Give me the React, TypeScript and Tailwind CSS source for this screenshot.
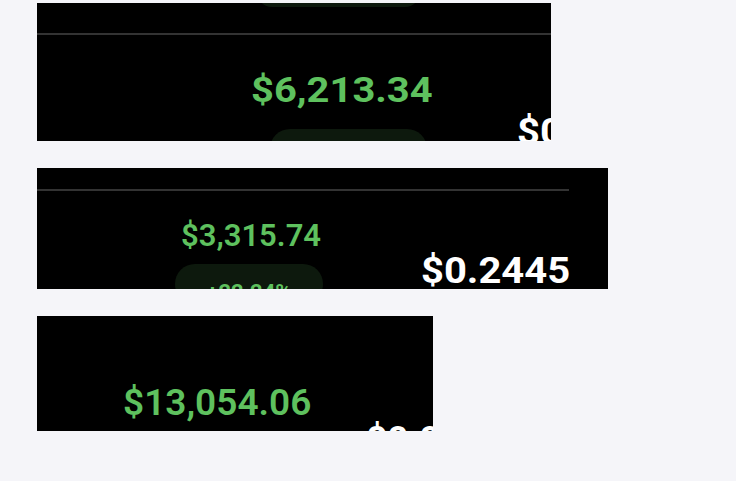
export default function App() {
  return (
    <div
      className="min-h-[481px] w-[736px] bg-[#f5f5f9] pt-[3px] flex flex-col gap-[27px]"
      style={{ fontFamily: "Roboto, 'Liberation Sans', sans-serif" }}
    >
      {/* first crop */}
      <div className="ml-[37px] w-[514px] h-[138px] bg-black overflow-hidden flex flex-col">
        <div className="mt-[-26px] ml-[220px] w-[163px] h-[30px] rounded-full bg-[#0d190d] shrink-0" />
        <div className="mt-[26px] h-[2px] w-full bg-[#333333] shrink-0" />
        <div className="mt-[38px] ml-[214px] self-start origin-left scale-x-[1.14] text-[35px] leading-none font-bold text-[#5ec15e] whitespace-nowrap">
          $6,213.34
        </div>
        <div className="mt-[5px] flex items-start shrink-0">
          <div className="mt-[16px] ml-[233px] w-[157px] h-[40px] rounded-full bg-[#0d190d] shrink-0" />
          <div className="ml-[90px] origin-left scale-x-[1.08] text-[37px] leading-none font-bold text-white whitespace-nowrap">
            $0.2445
          </div>
        </div>
      </div>

      {/* second crop */}
      <div className="ml-[37px] w-[571px] h-[121px] bg-black overflow-hidden flex flex-col">
        <div className="mt-[21px] h-[2px] w-[532px] bg-[#333333] shrink-0" />
        <div className="mt-[29px] ml-[144px] text-[31px] leading-none font-semibold text-[#5ec15e] whitespace-nowrap">
          $3,315.74
        </div>
        <div className="mt-[1px] flex items-start shrink-0">
          <div className="mt-[12px] ml-[138px] w-[148px] h-[40px] rounded-full bg-[#0d190d] shrink-0 flex justify-center pt-[18px]">
            <span className="text-[22px] leading-none font-bold text-[#5ec15e] whitespace-nowrap">+22.24%</span>
          </div>
          <div className="ml-[98px] origin-left scale-x-[1.08] text-[37px] leading-none font-bold text-white whitespace-nowrap">
            $0.2445
          </div>
        </div>
      </div>

      {/* third crop */}
      <div className="ml-[37px] w-[396px] h-[115px] bg-black overflow-hidden flex flex-col">
        <div className="mt-[68px] ml-[86px] text-[37px] leading-none font-semibold text-[#5ec15e] whitespace-nowrap">
          $13,054.06
        </div>
        <div className="ml-[329px] text-[37px] leading-none font-bold text-white whitespace-nowrap">
          $0.0612
        </div>
      </div>
    </div>
  );
}
